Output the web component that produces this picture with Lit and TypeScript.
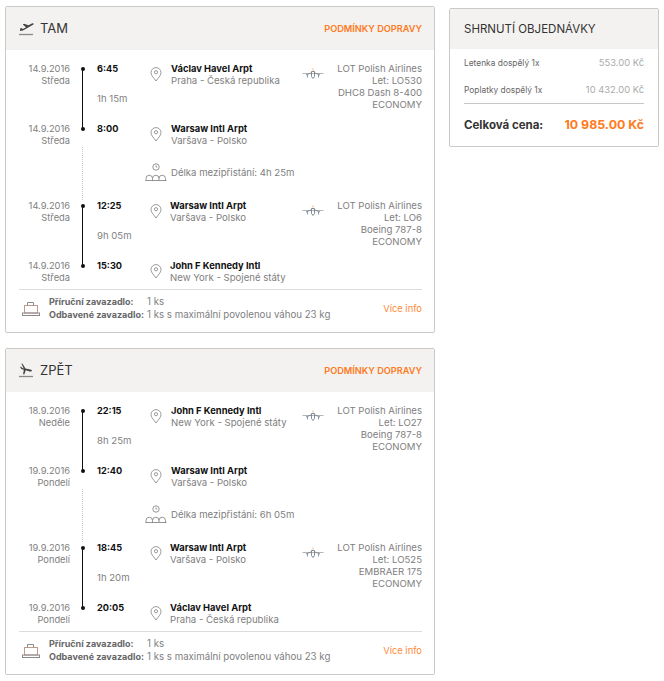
import { LitElement, html, css, svg } from "lit";
import { customElement } from "lit/decorators.js";

interface Stop { date: string; day: string; time: string; name: string; place: string; }
interface Seg { a: Stop; b: Stop; dur: string; air: string[]; }
interface Leg { title: string; arrive: boolean; segs: Seg[]; wait: string; }

const WAW = { name: "Warsaw Intl Arpt", place: "Varšava - Polsko" };
const PRG = { name: "Václav Havel Arpt", place: "Praha - Česká republika" };
const JFK = { name: "John F Kennedy Intl", place: "New York - Spojené státy" };
const A = "LOT Polish Airlines";

const legs: Leg[] = [
  {
    title: "TAM", arrive: false, wait: "4h 25m",
    segs: [
      { a: { date: "14.9.2016", day: "Středa", time: "6:45", ...PRG }, b: { date: "14.9.2016", day: "Středa", time: "8:00", ...WAW }, dur: "1h 15m", air: [A, "Let: LO530", "DHC8 Dash 8-400", "ECONOMY"] },
      { a: { date: "14.9.2016", day: "Středa", time: "12:25", ...WAW }, b: { date: "14.9.2016", day: "Středa", time: "15:30", ...JFK }, dur: "9h 05m", air: [A, "Let: LO6", "Boeing 787-8", "ECONOMY"] },
    ],
  },
  {
    title: "ZPĚT", arrive: true, wait: "6h 05m",
    segs: [
      { a: { date: "18.9.2016", day: "Neděle", time: "22:15", ...JFK }, b: { date: "19.9.2016", day: "Pondelí", time: "12:40", ...WAW }, dur: "8h 25m", air: [A, "Let: LO27", "Boeing 787-8", "ECONOMY"] },
      { a: { date: "19.9.2016", day: "Pondelí", time: "18:45", ...WAW }, b: { date: "19.9.2016", day: "Pondelí", time: "20:05", ...PRG }, dur: "1h 20m", air: [A, "Let: LO525", "EMBRAER 175", "ECONOMY"] },
    ],
  },
];

const pin = html`<svg class="pin" width="12" height="15" viewBox="0 0 12 15" fill="none" stroke="#8f8f8f" stroke-width="0.9"><path d="M6 14C4 11 1 8.600 1 5.600a5 5 0 0 1 10 0C11 8.600 8 11 6 14z"/><circle cx="6" cy="5.200" r="1.600"/></svg>`;

const plane = html`<svg class="plane" width="22" height="14" viewBox="0 0 22 14" fill="none" stroke-width="1"><path d="M0.500 6.500h21" stroke="#b5b5b5"/><path d="M4 8l5-2M18 8l-5-2" stroke="#8a8a8a"/><path d="M11 1.500v2" stroke="#f5b070"/><path d="M9.500 4.500h3v5l-1.500 2-1.500-2z" stroke="#808a96"/><path d="M5.500 7.500v3" stroke="#7f9fc0"/><path d="M16.500 7.500v3" stroke="#7f9fc0"/></svg>`;

const takeoff = svg`<path d="M1 10l3-.4 9.600-5.600c1-.6 1.300-1.300.8-1.600-.6-.3-1.500 0-2.500.5L9.500 4.300 5 2.800l-1.200.7L7 6.200 4 8 2.200 7l-1 .6z" fill="#444"/><path d="M0 13.500h14" stroke="#888" stroke-width="1.300"/>`;
const landing = svg`<path d="M2.300.5l1.200.3 3 4.600 4.800 1.200c1.200.3 1.900 1 1.700 1.500-.2.500-1.200.6-2.300.3L6.800 7.300 5.300 11.500l-1.200-.3.700-4.500L2.300 6 1 3.700l1 .1 1.300 1.300 1.400.4z" fill="#444"/><path d="M0 13.500h14" stroke="#888" stroke-width="1.300"/>`;

@customElement("app-root")
export class AppRoot extends LitElement {
  static styles = css`
    :host { display: block; font-family: "Inter", "Liberation Sans", sans-serif; font-size: 9.6px; line-height: 12px; color: #808080; background: #fff; }
    .page { display: flex; align-items: flex-start; gap: 14px; padding: 6px 5px 0 5px; width: 654px; }
    .main { width: 430px; flex: none; display: flex; flex-direction: column; gap: 15px; }
    .card { border: 1px solid #cbc9c6; border-radius: 2px; background: #fff; }
    .head { height: 43px; background: #f4f2f0; display: flex; align-items: center; padding: 0 12px 0 13px; }
    .head svg { margin-right: 6px; margin-top: -1px; }
    .title { font-size: 13px; color: #333; flex: 1; margin-top: -2px; }
    .rules { font-size: 9.200px; font-weight: 600; color: #ff7a21; }
    .body { padding: 13px 12px 0 0; }
    .seg { display: flex; position: relative; }
    .seg::before { content: ""; position: absolute; left: 76px; top: 6px; height: 60px; width: 1px; background: #111; }
    .stops { flex: 1; }
    .stop { display: grid; grid-template-columns: 64px 27px 53px 21px 1fr; height: 24px; }
    .seg.later .stop { grid-template-columns: 64px 27px 53px 20px 1fr; }
    .date { text-align: right; font-size: 9.300px; }
    .dot { position: relative; }
    .dot::after { content: ""; position: absolute; left: 10.500px; top: 4px; width: 4px; height: 4px; border-radius: 50%; background: #111; }
    .time { font-weight: 700; color: #111; font-size: 9.200px; }
    .pin { margin-top: 4px; }
    .name { font-weight: 700; color: #111; font-size: 9.400px; }
    .dur { padding: 6px 0 18px 91px; }
    .air { text-align: right; width: 120px; position: relative; }
    .plane { position: absolute; left: 0; top: 4px; }
    .wait { height: 53px; display: flex; align-items: center; padding-left: 139px; position: relative; gap: 4px; }
    .wait::before { content: ""; position: absolute; left: 76px; top: 0; bottom: 0; border-left: 1px dotted #c8c8c8; }
    .wait svg { margin-top: -2px; }
    .wait span { margin-top: -2px; }
    .foot { margin: 5px 0 0 13px; border-top: 1px solid #dedcda; padding: 6px 0 11px 3px; display: flex; align-items: center; }
    .foot svg { margin-right: 9px; }
    .bag { flex: 1; }
    .bagrow { display: flex; height: 12.500px; font-size: 9.700px; }
    .bagrow b { color: #666; font-weight: 700; width: 98px; flex: none; font-size: 9px; white-space: nowrap; }
    .more { color: #ff8a3c; font-size: 9.400px; }
    .side { width: 210px; box-sizing: border-box; margin-top: 2px; flex: none; }
    .side .head { height: 40px; padding: 0 14px; }
    .side .title { font-size: 11.500px; color: #333; margin-top: 0; }
    .rows { padding: 8px 14px 0 14px; }
    .row { display: flex; justify-content: space-between; height: 27px; color: #aaa; font-size: 9.400px; }
    .row + .row { height: 19px; }
    .row span:first-child { color: #666; font-size: 8.400px; }
    .total { border-top: 1px solid #c8c6c4; display: flex; justify-content: space-between; align-items: center; height: 42px; }
    .total b { font-size: 11.500px; color: #333; }
    .total strong { font-size: 12.400px; color: #ff7a21; }
  `;

  private stop(s: Stop) {
    return html`<div class="stop">
      <div class="date">${s.date}<br />${s.day}</div>
      <div class="dot"></div>
      <div class="time">${s.time}</div>
      <div>${pin}</div>
      <div><div class="name">${s.name}</div><div>${s.place}</div></div>
    </div>`;
  }

  private leg(l: Leg) {
    return html`<section class="card">
      <header class="head">
        <svg width="15" height="15" viewBox="0 0 15 15" fill="none">${l.arrive ? landing : takeoff}</svg>
        <span class="title">${l.title}</span>
        <span class="rules">PODMÍNKY DOPRAVY</span>
      </header>
      <div class="body">
        ${l.segs.map((s, i) => html`
          ${i > 0 ? html`<div class="wait">
            <svg width="22" height="20" viewBox="0 0 22 20" fill="none" stroke="#8a8a8a" stroke-width="0.9"><circle cx="11" cy="4" r="3.200"/><path d="M11 2.500V4h1.200"/><path d="M1 18v-2.500a3 3 0 0 1 6.500 0V18M7.500 15.500a3 3 0 0 1 6.500 0V18M14 15.500a3 3 0 0 1 6.500 0V18M0.500 17.500h21"/></svg>
            <span>Délka mezipřistání: ${l.wait}</span>
          </div>` : ""}
          <div class="seg ${i > 0 ? "later" : ""}">
            <div class="stops">
              ${this.stop(s.a)}
              <div class="dur">${s.dur}</div>
              ${this.stop(s.b)}
            </div>
            <div class="air">${plane}${s.air.map((t) => html`<div>${t}</div>`)}</div>
          </div>`)}
        <div class="foot">
          <svg width="18" height="16" viewBox="0 0 18 16" fill="none" stroke-width="1"><rect x="2.500" y="4.500" width="13" height="7.500" stroke="#c09a90"/><path d="M5.500 4.500v-3h6v3" stroke="#8a8a8a"/><rect x="0.500" y="12" width="17" height="2.500" stroke="#8a8a8a"/></svg>
          <div class="bag">
            <div class="bagrow"><b>Příruční zavazadlo:</b><span>1 ks</span></div>
            <div class="bagrow"><b>Odbavené zavazadlo:</b><span>1 ks s maximální povolenou váhou 23 kg</span></div>
          </div>
          <span class="more">Více info</span>
        </div>
      </div>
    </section>`;
  }

  render() {
    return html`<div class="page">
      <div class="main">${legs.map((l) => this.leg(l))}</div>
      <aside class="card side">
        <header class="head"><span class="title">SHRNUTÍ OBJEDNÁVKY</span></header>
        <div class="rows">
          <div class="row"><span>Letenka dospělý 1x</span><span>553.00 Kč</span></div>
          <div class="row"><span>Poplatky dospělý 1x</span><span>10 432.00 Kč</span></div>
          <div class="total"><b>Celková cena:</b><strong>10 985.00 Kč</strong></div>
        </div>
      </aside>
    </div>`;
  }
}
